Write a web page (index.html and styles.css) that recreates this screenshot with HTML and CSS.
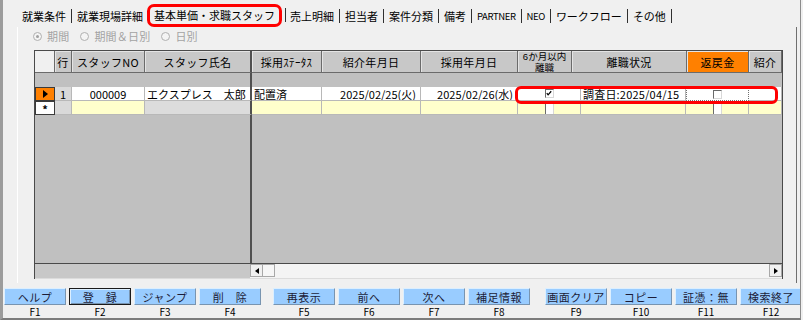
FILE: index.html
```html
<!DOCTYPE html>
<html lang="ja">
<head>
<meta charset="utf-8">
<title>基本単価・求職スタッフ</title>
<link rel="stylesheet" href="styles.css">
</head>
<body>
<div class="screen">
  <div class="tabs">
    <span class="tab">就業条件</span>
    <span class="tab">就業現場詳細</span>
    <span class="tab active">基本単価・求職スタッフ</span>
    <span class="tab">売上明細</span>
    <span class="tab">担当者</span>
    <span class="tab">案件分類</span>
    <span class="tab">備考</span>
    <span class="tab narrow">PARTNER</span>
    <span class="tab narrow">NEO</span>
    <span class="tab">ワークフロー</span>
    <span class="tab">その他</span>
  </div>

  <div class="panel">
    <div class="radios">
      <span class="radio on"><i class="dot"></i>期間</span>
      <span class="radio"><i class="dot"></i>期間＆日別</span>
      <span class="radio"><i class="dot"></i>日別</span>
    </div>

    <div class="grid">
      <div class="row head">
        <div class="c sel"></div>
        <div class="c">行</div>
        <div class="c">スタッフNO</div>
        <div class="c frz">スタッフ氏名</div>
        <div class="c">採用ｽﾃｰﾀｽ</div>
        <div class="c">紹介年月日</div>
        <div class="c">採用年月日</div>
        <div class="c two"><span class="l1">6か月以内</span><span class="l2">離職</span></div>
        <div class="c">離職状況</div>
        <div class="c orange">返戻金</div>
        <div class="c">紹介</div>
      </div>
      <div class="band"><div class="bl"></div><div class="br"></div></div>
      <div class="row body cur">
        <div class="c sel cursel"><span class="tri"></span></div>
        <div class="c gray ctr">1</div>
        <div class="c ctr">000009</div>
        <div class="c frz lft">エクスプレス　太郎</div>
        <div class="c lft">配置済</div>
        <div class="c rgt">2025/02/25(火)</div>
        <div class="c rgt">2025/02/26(水)</div>
        <div class="c ctr"><span class="cb checked"><svg width="9" height="9" viewBox="0 0 9 9"><polyline points="2,4 3.5,6 7,2" fill="none" stroke="#000" stroke-width="1.4"/></svg></span></div>
        <div class="c lft pad">調査日:2025/04/15</div>
        <div class="c ctr focus"><span class="cb"></span></div>
        <div class="c"></div>
      </div>
      <div class="row body newrow">
        <div class="c sel newsel">*</div>
        <div class="c gray"></div>
        <div class="c yel"></div>
        <div class="c frz gray2"></div>
        <div class="c yel"></div>
        <div class="c yel"></div>
        <div class="c yel"></div>
        <div class="c yel ctr"><span class="cb half"></span></div>
        <div class="c yel"></div>
        <div class="c yel ctr"><span class="cb half"></span></div>
        <div class="c yel"></div>
      </div>
      <div class="empty"><div class="el"></div><div class="er"></div></div>
      <div class="hscroll">
        <div class="hl"></div>
        <div class="sbtn"><span class="larr"></span></div>
        <div class="thumb"></div>
        <div class="track"></div>
        <div class="sbtn"><span class="rarr"></span></div>
      </div>
      <div class="mark"></div>
    </div>
  </div>

  <div class="fkeys">
    <div class="fk"><div class="btn">ヘルプ</div><div class="fl">F1</div></div>
    <div class="fk"><div class="btn def">登　録</div><div class="fl">F2</div></div>
    <div class="fk"><div class="btn">ジャンプ</div><div class="fl">F3</div></div>
    <div class="fk"><div class="btn">削　除</div><div class="fl">F4</div></div>
    <div class="fk g2"><div class="btn">再表示</div><div class="fl">F5</div></div>
    <div class="fk"><div class="btn">前へ</div><div class="fl">F6</div></div>
    <div class="fk"><div class="btn">次へ</div><div class="fl">F7</div></div>
    <div class="fk"><div class="btn">補足情報</div><div class="fl">F8</div></div>
    <div class="fk g3"><div class="btn">画面クリア</div><div class="fl">F9</div></div>
    <div class="fk"><div class="btn">コピー</div><div class="fl">F10</div></div>
    <div class="fk"><div class="btn">証憑：無</div><div class="fl">F11</div></div>
    <div class="fk"><div class="btn">検索終了</div><div class="fl">F12</div></div>
  </div>
</div>
</body>
</html>
```

FILE: styles.css
```css
html, body {
  margin: 0;
  padding: 0;
}
body {
  width: 803px;
  height: 320px;
  overflow: hidden;
  background: #f0f0f0;
  font-family: "Noto Sans CJK JP", "Noto Sans", sans-serif;
  font-size: 11px;
  color: #000;
}
.screen {
  width: 801px;
  height: 320px;
  box-sizing: border-box;
  border-left: 3px solid #9c9c9c;
  border-right: 1px solid #8c8c8c;
  border-bottom: 2px solid #7c7c7c;
  display: flex;
  flex-direction: column;
  overflow: hidden;
}

/* tabs */
.tabs {
  margin-top: 4px;
  height: 23px;
  display: flex;
  align-items: center;
  padding-left: 14px;
  white-space: nowrap;
}
.tab {
  height: 14px;
  line-height: 14px;
  padding: 0 5px;
  border-right: 1px solid #303030;
}
.tab.narrow {
  font-size: 9.5px;
  letter-spacing: -0.4px;
}
.tab.active {
  height: 23px;
  line-height: 17px;
  box-sizing: border-box;
  border: 3px solid #ff0000;
  border-radius: 7px;
  padding: 0 4px;
  margin-left: -2px;
  margin-right: 3px;
  position: relative;
}
.tab.active::after {
  content: "";
  position: absolute;
  right: -7px;
  top: 1px;
  height: 14px;
  border-right: 1px solid #303030;
}

/* panel */
.panel {
  margin-left: 14px;
  width: 780px;
  height: 256px;
  box-sizing: border-box;
  border-left: 1px solid #ffffff;
  border-right: 1px solid #6f6f6f;
  padding-top: 2px;
}
.radios {
  margin-left: 15px;
  height: 14px;
  display: flex;
  align-items: center;
  color: #a3a3a3;
  margin-bottom: 7px;
}
.radio {
  display: flex;
  align-items: center;
  gap: 5px;
  margin-right: 11px;
  letter-spacing: 0.2px;
}
.dot {
  width: 9px;
  height: 9px;
  box-sizing: border-box;
  border: 1px solid #b0b0b0;
  border-radius: 50%;
  background: #f4f4f4;
  position: relative;
}
.radio.on .dot::after {
  content: "";
  position: absolute;
  left: 2px;
  top: 2px;
  width: 3px;
  height: 3px;
  border-radius: 50%;
  background: #a0a0a0;
}

/* grid */
.grid {
  position: relative;
  margin-left: 16px;
  width: 749px;
  box-sizing: border-box;
  border: 1px solid #4a4a4a;
  border-bottom: none;
  background: #c0c0c0;
}
.row {
  display: grid;
  grid-template-columns: 20px 17px 73px 107px 70px 99px 97px 54px 115px 62px 33px;
}
.row.body {
  grid-template-columns: 20px 17px 73px 107px 70px 99px 97px 63px 105px 63px 33px;
}
.c {
  box-sizing: border-box;
  overflow: hidden;
  white-space: nowrap;
  display: flex;
  align-items: center;
}
.head .c {
  height: 22px;
  justify-content: center;
  background: #c8c8c8;
  border-right: 1px solid #6b6b6b;
  border-bottom: 1px solid #6b6b6b;
  box-shadow: inset 1px 1px 0 #e4e4e4;
  letter-spacing: 0.3px;
}
.head .c.sel {
  background: #f0f0f0;
  box-shadow: none;
}
.head .c.two {
  flex-direction: column;
  justify-content: center;
  font-family: "Liberation Sans", "Noto Sans CJK JP", sans-serif;
  font-size: 9.5px;
  letter-spacing: 0;
  overflow: visible;
}
.two .l1, .two .l2 {
  display: block;
  height: 11px;
  line-height: 11px;
}
.head .c.orange {
  background: #ff8000;
}
.c.frz {
  border-right: 2px solid #505050 !important;
}
.band {
  height: 14px;
  display: grid;
  grid-template-columns: 217px 1fr;
}
.bl {
  border-right: 2px solid #505050;
  box-sizing: border-box;
}
.body .c {
  height: 14px;
  background: #ffffff;
  border-right: 1px solid #b8b8b8;
  border-bottom: 1px solid #b8b8b8;
  padding: 0 2px;
}
.body .c.ctr { justify-content: center; }
.body .c.lft { justify-content: flex-start; }
.body .c.rgt { justify-content: flex-end; padding-right: 4px; }
.body .c.pad { padding-left: 2px; letter-spacing: 0.2px; }
.body .c.gray { background: #d9d9d9; }
.body .c.gray2 { background: #dcdcdc; }
.body .c.yel { background: #ffffcc; }
.body .c.focus { border: 1px dotted #707070; }
.body .c.sel {
  justify-content: center;
  border: 1px solid #3a3a3a;
  padding: 0;
}
.body .c.cursel { background: #ff8000; }
.body .c.newsel {
  background: #ffffff;
  font-weight: bold;
  font-size: 11px;
  line-height: 11px;
  align-items: flex-start;
  padding-top: 2px;
  overflow: visible;
}
.tri {
  width: 0;
  height: 0;
  border-top: 4px solid transparent;
  border-bottom: 4px solid transparent;
  border-left: 5px solid #000;
}
.cb {
  width: 9px;
  height: 9px;
  box-sizing: border-box;
  background: #ffffff;
  border-top: 1px solid #6a6a6a;
  border-left: 1px solid #6a6a6a;
  border-right: 1px solid #d8d8d8;
  border-bottom: 1px solid #d8d8d8;
  display: flex;
}
.cb svg { margin: -1px 0 0 -1px; }
.cb.half {
  height: 12px;
  margin-top: 2px;
  border-bottom: none;
}
.empty {
  height: 148px;
  display: grid;
  grid-template-columns: 217px 1fr;
  border-bottom: 1px solid #4a4a4a;
}
.el {
  border-right: 2px solid #505050;
  box-sizing: border-box;
}
.hscroll {
  height: 14px;
  display: flex;
  background: #f4f4f4;
  border-bottom: 1px solid #dcdcdc;
}
.hl {
  width: 215px;
  background: #c8c8c8;
}
.sbtn {
  width: 13px;
  height: 13px;
  box-sizing: border-box;
  background: #f0f0f0;
  border: 1px solid #a8a8a8;
  display: flex;
  align-items: center;
  justify-content: center;
}
.thumb {
  width: 12px;
  height: 13px;
  box-sizing: border-box;
  background: #f6f6f6;
  border: 1px solid #a8a8a8;
  border-left: none;
}
.track {
  flex: 1;
}
.larr {
  border-top: 3px solid transparent;
  border-bottom: 3px solid transparent;
  border-right: 4px solid #000;
}
.rarr {
  border-top: 3px solid transparent;
  border-bottom: 3px solid transparent;
  border-left: 4px solid #000;
}
.mark {
  position: absolute;
  left: 480px;
  top: 35px;
  width: 263px;
  height: 18px;
  box-sizing: border-box;
  border: 3px solid #ff0000;
  border-radius: 6px;
}

/* function keys */
.fkeys {
  display: flex;
  padding-top: 5px;
  padding-left: 1px;
  gap: 3px;
}
.fk {
  width: 62px;
  flex: 0 0 62px;
  display: flex;
  flex-direction: column;
  align-items: center;
}
.fk.g2 { margin-left: 9px; }
.fk.g3 { margin-left: 12px; }
.btn {
  width: 62px;
  height: 17px;
  box-sizing: border-box;
  background: #99ccff;
  border-top: 1px solid #dcefff;
  border-left: 1px solid #dcefff;
  border-right: 1px solid #7894b0;
  border-bottom: 1px solid #7894b0;
  display: flex;
  align-items: center;
  justify-content: center;
  color: #1c1c38;
  letter-spacing: 0.5px;
  white-space: nowrap;
}
.btn.def {
  border: 1px solid #1a1a1a;
  box-shadow: inset 1px 1px 0 #dcefff, inset -1px -1px 0 #7894b0;
}
.fl {
  height: 12px;
  line-height: 12px;
  margin-top: 1px;
  font-size: 10px;
}
```
